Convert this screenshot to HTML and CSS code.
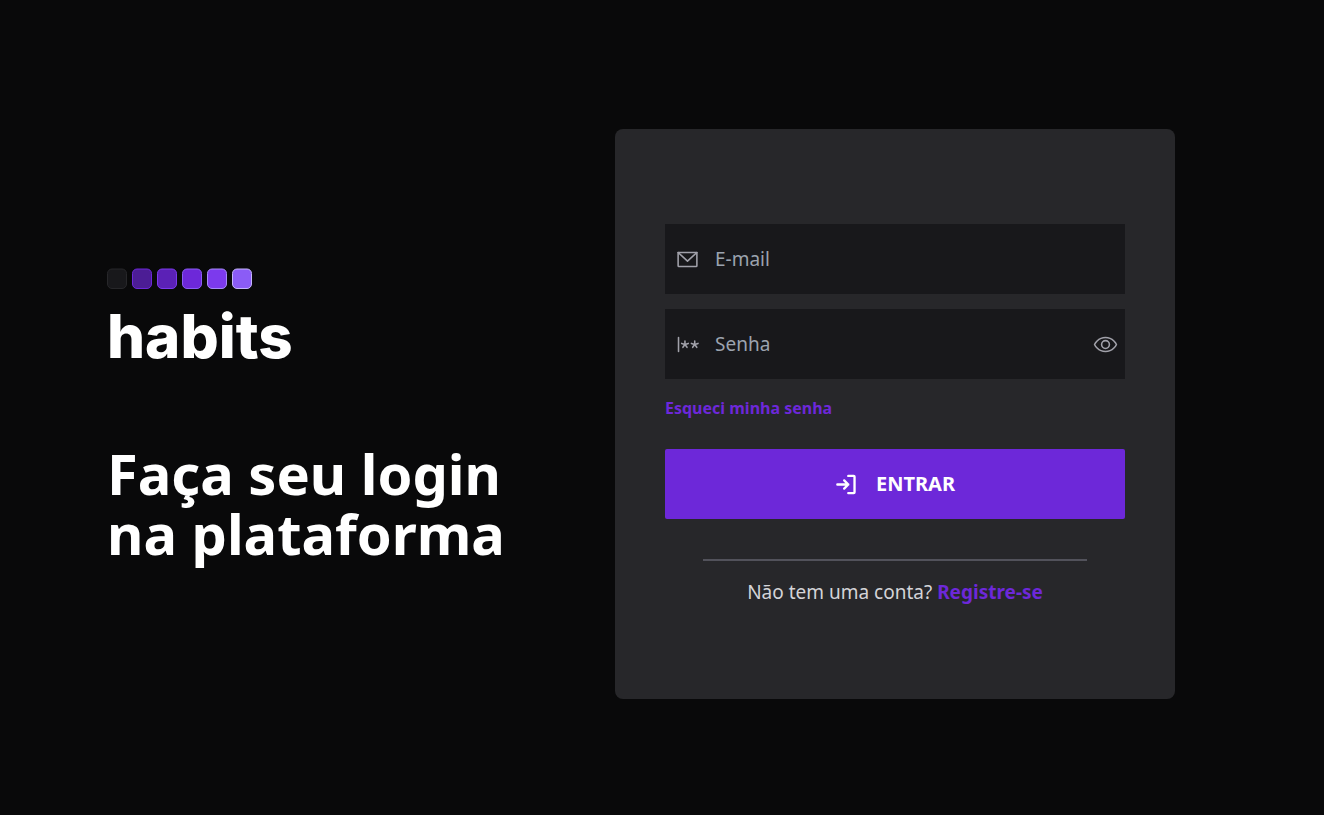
FILE: index.html
```html
<!DOCTYPE html>
<html lang="pt-BR">
<head>
<meta charset="utf-8">
<meta name="viewport" content="width=device-width, initial-scale=1">
<title>Habits</title>
<link rel="stylesheet" href="styles.css">
</head>
<body>
<main class="page">
  <section class="intro">
    <div class="logo">
      <svg class="squares" width="146" height="22" viewBox="0 0 146 22" aria-hidden="true">
        <rect x="0.5" y="1" width="19" height="19.5" rx="4.5" fill="#18181b" stroke="#27272a"/>
        <rect x="25.5" y="1" width="19" height="19.5" rx="4.5" fill="#4c1d95" stroke="#6d28d9"/>
        <rect x="50.5" y="1" width="19" height="19.5" rx="4.5" fill="#5b21b6" stroke="#7c3aed"/>
        <rect x="75.5" y="1" width="19" height="19.5" rx="4.5" fill="#6d28d9" stroke="#8b5cf6"/>
        <rect x="100.5" y="1" width="19" height="19.5" rx="4.5" fill="#7c3aed" stroke="#a78bfa"/>
        <rect x="125.5" y="1" width="19" height="19.5" rx="4.5" fill="#8b5cf6" stroke="#c4b5fd"/>
      </svg>
      <span class="wordmark">habits</span>
    </div>
    <h1 class="headline">Faça seu login<br>na plataforma</h1>
  </section>
  <form class="card">
    <div class="field">
      <label for="email" aria-label="E-mail">
        <svg class="icon" viewBox="0 0 256 256" fill="none" stroke="currentColor" stroke-width="16" stroke-linecap="round" stroke-linejoin="round"><path d="M224 56l-96 88-96-88"/><path d="M32 56h192v136a8 8 0 0 1-8 8H40a8 8 0 0 1-8-8z"/></svg>
      </label>
      <input id="email" type="email" placeholder="E-mail">
    </div>
    <div class="field">
      <label for="password" aria-label="Senha">
        <svg class="icon" viewBox="0 0 256 256" fill="none" stroke="currentColor" stroke-width="16" stroke-linecap="round" stroke-linejoin="round"><path d="M36 56v144M102 92v36M68 117l34 11M81 157l21-29M123 157l-21-29M136 117l-34 11M202 92v36M168 117l34 11M181 157l21-29M223 157l-21-29M236 117l-34 11"/></svg>
      </label>
      <input id="password" type="password" placeholder="Senha">
      <button class="reveal" type="button" aria-label="Mostrar senha">
        <svg class="icon" viewBox="0 0 256 256" fill="none" stroke="currentColor" stroke-width="16" stroke-linecap="round" stroke-linejoin="round"><path d="M128 56C48 56 16 128 16 128s32 72 112 72 112-72 112-72-32-72-112-72z"/><circle cx="128" cy="128" r="40"/></svg>
      </button>
    </div>
    <a class="forgot" href="#">Esqueci minha senha</a>
    <button class="submit" type="submit">
      <svg class="icon" viewBox="0 0 256 256" fill="none" stroke="currentColor" stroke-width="24" stroke-linecap="round" stroke-linejoin="round"><path d="M94 170l42-42-42-42M24 128h112M136 40h56a8 8 0 0 1 8 8v160a8 8 0 0 1-8 8h-56"/></svg>
      <span>ENTRAR</span>
    </button>
    <hr class="rule">
    <p class="register">Não tem uma conta? <a href="#">Registre-se</a></p>
  </form>
</main>
</body>
</html>
```
FILE: styles.css
```css
* { box-sizing: border-box; }

body {
  margin: 0;
  background: #09090a;
  color: #fff;
  font-family: "Segoe UI", "Noto Sans", "Open Sans", sans-serif;
}

.page {
  display: flex;
  align-items: center;
  justify-content: space-between;
  gap: 40px;
  max-width: 1110px;
  min-height: 100vh;
  margin: 0 auto;
  padding: 13px 42px 0 0;
}

.intro { padding-top: 3px; }

.logo {
  display: flex;
  flex-direction: column;
  gap: 10px;
}

.wordmark {
  font: 800 60px/72px Inter, sans-serif;
}

.headline {
  margin: 71px 0 0;
  font-size: 56px;
  font-weight: 700;
  line-height: 60px;
}

.card {
  display: flex;
  flex-direction: column;
  flex: 0 1 560px;
  padding: 95px 50px 93px;
  border-radius: 8px;
  background: #27272a;
}

.field {
  display: flex;
  align-items: center;
  height: 70px;
  margin-bottom: 15px;
  padding: 0 7px 0 10px;
  background: #18181b;
  color: #a1a1aa;
}

.field label { display: flex; }

.field input {
  flex: 1;
  min-width: 0;
  height: 100%;
  padding: 0 15px;
  border: 0;
  outline: 0;
  background: transparent;
  color: #fff;
  font: 400 19px/28px "Segoe UI", "Noto Sans", "Open Sans", sans-serif;
}

.field input::placeholder {
  color: #9ca3af;
  opacity: 1;
}

.icon {
  display: block;
  width: 25px;
  height: 25px;
}

.reveal {
  padding: 0;
  border: 0;
  background: none;
  color: inherit;
  cursor: pointer;
}

.forgot {
  align-self: flex-start;
  color: #6d28d9;
  font-size: 16px;
  font-weight: 700;
  line-height: 28px;
  text-decoration: none;
}

.submit {
  display: flex;
  align-items: center;
  justify-content: center;
  gap: 16px;
  height: 70px;
  margin-top: 27px;
  border: 0;
  border-radius: 2px;
  background: #6d28d9;
  color: #fff;
  font: 700 20px/28px "Segoe UI", "Noto Sans", "Open Sans", sans-serif;
  cursor: pointer;
}

.rule {
  width: 384px;
  max-width: 100%;
  margin: 40px auto 17px;
  border: 0;
  border-top: 2px solid #52525b;
}

.register {
  margin: 0;
  color: #d4d4d8;
  font-size: 19px;
  line-height: 28px;
  text-align: center;
}

.register a {
  color: #6d28d9;
  font-weight: 700;
  text-decoration: none;
}
```
